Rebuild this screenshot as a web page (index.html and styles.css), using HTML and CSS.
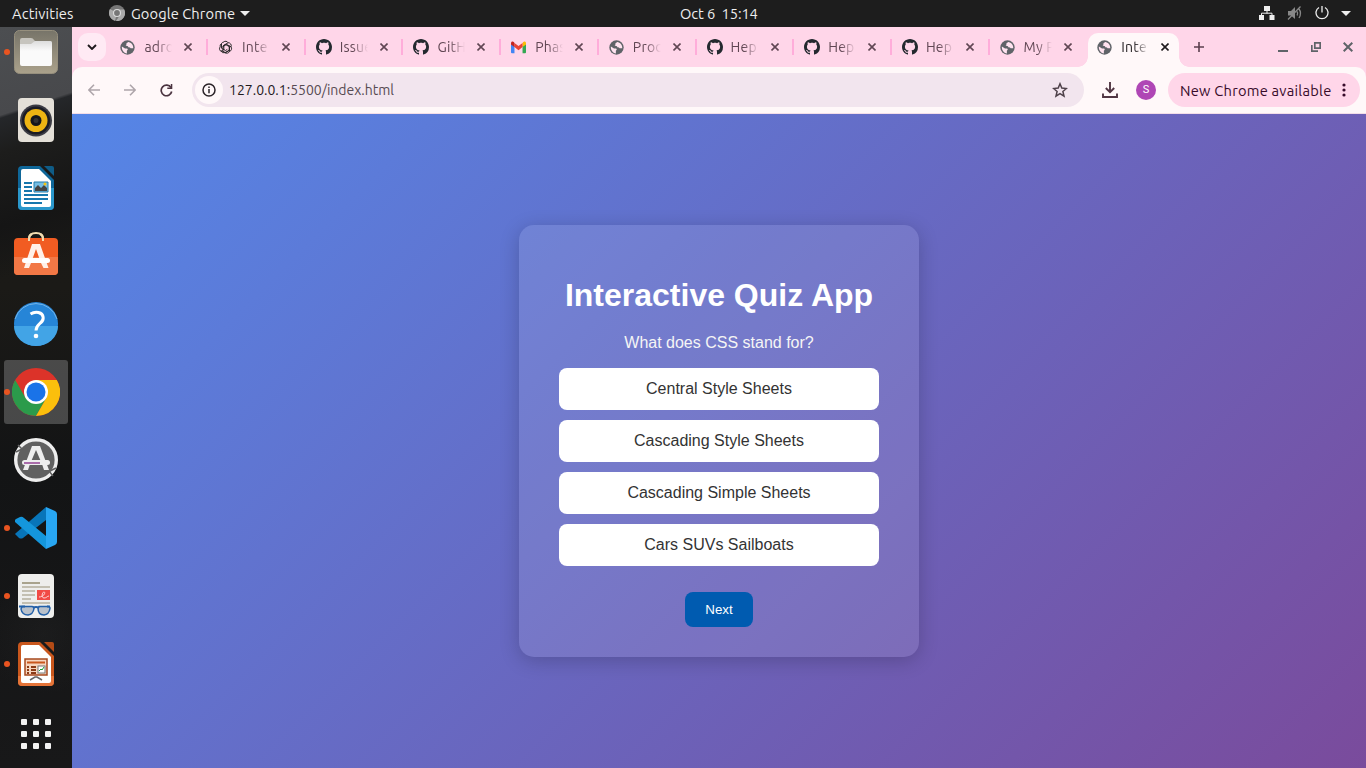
FILE: index.html
```html
<!DOCTYPE html>
<html lang="en">
<head>
<meta charset="utf-8">
<title>Interactive Quiz App</title>
<link rel="stylesheet" href="styles.css">
</head>
<body>
<svg class="defs" width="0" height="0">
  <symbol id="globe" viewBox="0 0 24 24"><circle cx="12" cy="12" r="11.5" fill="#5f6368"/><path d="M3 10.5l5 3.2h3.5l1 1.5-1.5 2v4.3C6 21 2.300 16 3 10.500zM13 3c-.7 1-2.500 1-2.700 2.400.5 1.700-.8 2.200-1.300 3.500 1.500.6 4 .3 4.300 2.200 1 1.400 3.200.4 3.700 2.200h4.200c.7-5-3-9.800-8.200-10.300z" fill="#ffe3f0"/></symbol>
  <symbol id="github" viewBox="0 0 16 16"><path fill="#24292f" d="M8 0C3.580 0 0 3.580 0 8c0 3.540 2.290 6.530 5.470 7.590.4.070.55-.17.55-.38 0-.19-.01-.82-.01-1.490-2.010.37-2.530-.49-2.690-.94-.09-.23-.48-.94-.82-1.130-.28-.15-.68-.52-.01-.53.63-.01 1.080.58 1.230.82.72 1.210 1.870.87 2.330.66.070-.52.28-.87.51-1.070-1.780-.2-3.640-.89-3.640-3.950 0-.87.31-1.590.82-2.150-.08-.2-.36-1.020.08-2.120 0 0 .67-.21 2.200.82.64-.18 1.320-.27 2-.27s1.360.09 2 .27c1.530-1.040 2.200-.82 2.200-.82.44 1.100.16 1.920.08 2.120.51.56.82 1.270.82 2.150 0 3.070-1.870 3.750-3.650 3.950.29.25.54.73.54 1.480 0 1.070-.01 1.930-.01 2.200 0 .21.15.46.55.38A8 8 0 0 0 16 8c0-4.420-3.580-8-8-8z"/></symbol>
  <symbol id="openai" viewBox="0 0 24 24"><g fill="none" stroke="#222" stroke-width="1.500"><path d="M12 7.300L7.900 9.700v7.500l-2.300 1.300A4.700 4.700 0 0 1 3.500 11"/><path d="M9 3.200a4.700 4.700 0 0 1 7.200 1.200L9.300 8.400v7.900M16.200 4.400a4.700 4.700 0 0 1 4.600 6.600l-6.900-4-6 3.500M20.800 11a4.700 4.700 0 0 1-2.400 7.300v-7.500L12 7.200M18.400 18.300a4.700 4.700 0 0 1-7.200 1.900l6.700-3.900V9M11.200 20.200a4.700 4.700 0 0 1-6-3l1-.2 5.800 3.300 6-3.500M5.600 5.700a4.700 4.700 0 0 1 3.600-2.500M5.600 5.700v7.500l6.300 3.600 3-1.800M5.600 5.700A4.700 4.700 0 0 0 3.500 11"/></g></symbol>
  <symbol id="gmail" viewBox="0 0 16 13"><path d="M0 2.500V11.500Q0 12.500 1 12.500H3.700V5z" fill="#4285f4"/><path d="M12.300 5V12.500H15Q16 12.500 16 11.500V2.500z" fill="#34a853"/><path d="M12.300 1.600V6L16 3.200V2C16 0 14-.3 12.800.8z" fill="#fbbc04"/><path d="M3.700 6V1.600L8 4.900l4.300-3.300V6L8 9.300z" fill="#ea4335"/><path d="M0 2V3.200L3.700 6V1.600L3.200.8C2-.3 0 0 0 2z" fill="#c5221f"/></symbol>
  <symbol id="close" viewBox="0 0 8 8"><path d="M.5.5l7 7M7.500.5l-7 7" stroke="currentColor" stroke-width="1.600" fill="none"/></symbol>
</svg>

<header class="topbar">
  <span class="activities">Activities</span>
  <span class="appmenu">
    <svg width="16" height="16" viewBox="0 0 16 16"><circle cx="8" cy="8" r="8" fill="#777"/><path d="M8 8L1 4a8 8 0 0 0 5 11.700zM8 4.500h7.200A8 8 0 0 1 7 16l4-6z" fill="#aaa"/><circle cx="8" cy="8" r="4" fill="#ddd"/><circle cx="8" cy="8" r="2.900" fill="#777"/></svg>
    <span class="appname">Google Chrome</span>
    <svg width="10" height="5" viewBox="0 0 10 5"><path d="M0 0h10L5 5z" fill="#eee"/></svg>
  </span>
  <span class="clock">Oct 6&nbsp; 15:14</span>
  <span class="status">
    <svg width="16" height="14" viewBox="0 0 16 14"><path d="M5 0h6v5H5zM0 9h5v5H0zM10.500 9h5v5h-5z" fill="#eee"/><path d="M8 4v3.500M2.500 10V7.200h10.500V10" stroke="#eee" fill="none"/></svg>
    <svg width="16" height="14" viewBox="0 0 16 14"><path d="M1 5h3l4-4v12L4 9.500H1z" fill="#888"/><path d="M1 13.500L13.500 .5M10 5.500q1.500 2 0 4M12 3q3 4 0 9" stroke="#888" fill="none" stroke-width="1.300"/></svg>
    <svg width="14" height="14" viewBox="0 0 14 14"><path d="M4 1.500a6 6 0 1 0 6 0M7 0v6.500" stroke="#eee" fill="none" stroke-width="1.300"/></svg>
    <svg width="10" height="5" viewBox="0 0 10 5"><path d="M0 0h10L5 5z" fill="#eee"/></svg>
  </span>
</header>

<main class="desktop">
  <nav class="dock">
    <div class="app running">
      <svg width="44" height="44" viewBox="0 0 44 44"><defs><linearGradient id="fg" x2="0" y2="1"><stop stop-color="#777469"/><stop offset="1" stop-color="#aaa18b"/></linearGradient><linearGradient id="ff" x2="0" y2="1"><stop stop-color="#ddd"/><stop offset=".4" stop-color="#fafafa"/></linearGradient></defs><rect x=".5" y=".5" width="43" height="43" rx="5" fill="url(#fg)" stroke="#968f7d"/><path d="M6 11V10Q6 8 8 8h9q2 0 3 2l1 1h15q2 0 2 2v14H6z" fill="#c6c4be"/><path d="M6 14h11l4-3h15q2 0 2 2v21q0 2-2 2H8q-2 0-2-2z" fill="url(#ff)"/></svg>
    </div>
    <div class="app">
      <svg width="36" height="44" viewBox="0 0 36 44"><rect width="36" height="44" rx="4" fill="#e4e0d8"/><circle cx="18" cy="22.500" r="16" fill="#3c3c44"/><circle cx="18" cy="22.500" r="14" fill="#1b1c25"/><circle cx="18" cy="22.500" r="11.500" fill="#edb413"/><circle cx="18" cy="22.500" r="5.500" fill="#15171c"/><circle cx="18" cy="22.500" r="2.500" fill="#333"/></svg>
    </div>
    <div class="app">
      <svg width="36" height="44" viewBox="0 0 36 44"><path d="M4 0h18l14 14v26q0 4-4 4H4q-4 0-4-4V4q0-4 4-4z" fill="#0f6799"/><path d="M0 22h36v18q0 4-4 4H4q-4 0-4-4z" fill="#2a97cb"/><path d="M5 3h16l12 12v24q0 2-2 2H5q-2 0-2-2V5q0-2 2-2z" fill="#fff"/><path d="M26 0h8q2 0 2 2v8z" fill="#0f5c87"/><path d="M6 17h8M6 21h8M6 25h8M6 29h24M6 33h24M6 37h18" stroke="#1777ad" stroke-width="2"/><path d="M16 16h14v10H16z" fill="#75bee5" stroke="#247caa"/><path d="M17 25v-3l3-3 3 3 3-3 3 3v3z" fill="#444"/><circle cx="27" cy="18" r="1.500" fill="#f5c211"/></svg>
    </div>
    <div class="app">
      <svg class="software" width="44" height="44" viewBox="0 0 44 44"><path d="M15 9V7q0-6 7-6t7 6v2" fill="none" stroke="#f3ddb1" stroke-width="2"/><rect y="6" width="44" height="37" rx="4" fill="#f15c22"/><path d="M0 25h44v14q0 4-4 4H4q-4 0-4-4z" fill="#f27846"/><path d="M15 9V7q0-4 3-5M29 9V7q0-4-3-5" fill="none" stroke="#f3ddb1" stroke-width="2"/><path d="M18 12h8l8.500 24h-5L27 31l-5-14-5 14-2 5h-5z" fill="#fff1e9"/><rect x="8" y="26" width="28" height="5" rx="2.500" fill="#fff"/></svg>
    </div>
    <div class="app">
      <svg width="44" height="44" viewBox="0 0 44 44"><circle cx="22" cy="22" r="22" fill="#2685d7"/><path d="M0 24h44a22 20 0 0 1-44 0z" fill="#42a4e6"/><path d="M1 17a22 22 0 0 1 42 0" fill="none" stroke="#72b4ea"/><path d="M16.500 12q4-2.500 8-1.500c6 1.500 5.500 7.500 2.500 10-3 2.500-5 3.500-5 8" fill="none" stroke="#fff" stroke-width="3"/><circle cx="22" cy="34" r="2.300" fill="#fff"/></svg>
    </div>
    <div class="app running focused">
      <svg width="48" height="48" viewBox="0 0 48 48"><circle cx="24" cy="24" r="24" fill="#dc3329"/><path d="M3.200 12A24 24 0 0 0 24 48l10.400-18L24 24l-10.400 6z" fill="#2b9b4b"/><path d="M24 12h20.800A24 24 0 0 1 24 48l10.400-18z" fill="#fbbf0c"/><circle cx="24" cy="24" r="12" fill="#fff"/><circle cx="24" cy="24" r="9.500" fill="#1a73e8"/></svg>
    </div>
    <div class="app">
      <svg width="44" height="44" viewBox="0 0 44 44"><circle cx="22" cy="22" r="20.300" fill="#606060" stroke="#eee" stroke-width="3.400"/><path d="M4 7l5 5M2 14l6-3M36 33l6-3M35 33l4 5" stroke="#606060" stroke-width="1.500"/><path d="M18 8h8l9 24h-5l-2-6-6-14-6 14-2 6H9z" fill="#eee"/><rect x="8" y="22" width="28" height="5" rx="2.500" fill="#eee"/><path d="M10 25h16" stroke="#924093" stroke-width="1.500"/></svg>
    </div>
    <div class="app running">
      <svg width="42" height="42" viewBox="0 0 42 42"><path d="M0 27l4 4q2 1 4 0L31 13V0L1 26z" fill="#0875b9"/><path d="M1 12l4-2q2-1 4 1l22 18v13L0 15q-.5-2 1-3z" fill="#1496dc"/><path d="M31 0l9 4q2 1 2 3v28q0 2-2 3l-9 4z" fill="#28a6f2"/></svg>
    </div>
    <div class="app running">
      <svg width="36" height="44" viewBox="0 0 36 44"><rect width="36" height="44" rx="4" fill="#eeeeec"/><path d="M4 9h18" stroke="#a9a38d" stroke-width="2"/><path d="M4 13h28M4 17h13M4 21h13M4 25h9M4 29h28" stroke="#c3bfb1" stroke-width="2"/><path d="M19 16h13v10H19z" fill="#f14a45"/><path d="M21 23c5 0 7-5 5-5s-3 6 0 6 3-2 5-2" fill="none" stroke="#ffd5d5"/><path d="M4 32.500h10q2 0 2 2-1 6-6 6.500-6 0-7-6zM21 32.500h9q2 0 2 2-1 6-6 6.500-6 0-6-7z" fill="#b9c1cb" stroke="#2360a8" stroke-width="1.500"/><path d="M1 32.500h6M15 34q3-2 6 0M29 32.500h3" fill="none" stroke="#2360a8" stroke-width="2"/></svg>
    </div>
    <div class="app running">
      <svg width="36" height="44" viewBox="0 0 36 44"><path d="M4 0h18l14 14v26q0 4-4 4H4q-4 0-4-4V4q0-4 4-4z" fill="#c9571d"/><path d="M0 34h36v6q0 4-4 4H4q-4 0-4-4z" fill="#e57438"/><path d="M5 3h16l12 12v24q0 2-2 2H5q-2 0-2-2V5q0-2 2-2z" fill="#fff"/><path d="M26 0h8q2 0 2 2v8z" fill="#b34b16"/><rect x="7" y="17" width="22" height="16" fill="#f6d6bf" stroke="#a7491f" stroke-width="1.500"/><path d="M9 20.500h18" stroke="#c9571d" stroke-width="2"/><path d="M9 25h2m2 0h5M9 28h2m2 0h5M9 31h2m2 0h5" stroke="#8b3b16" stroke-width="2"/><rect x="20" y="24" width="7" height="7" fill="#fff" stroke="#777"/><path d="M21 29l2-2 1 1 2-3" stroke="#18a030" fill="none"/><path d="M12 38l5-3h2l5 3" stroke="#666" stroke-width="1.500" fill="none"/></svg>
    </div>
    <div class="app grid-app">
      <svg width="30" height="30" viewBox="0 0 30 30" fill="#f2f2f2"><rect width="6" height="6" rx="1"/><rect x="12" width="6" height="6" rx="1"/><rect x="24" width="6" height="6" rx="1"/><rect y="12" width="6" height="6" rx="1"/><rect x="12" y="12" width="6" height="6" rx="1"/><rect x="24" y="12" width="6" height="6" rx="1"/><rect y="24" width="6" height="6" rx="1"/><rect x="12" y="24" width="6" height="6" rx="1"/><rect x="24" y="24" width="6" height="6" rx="1"/></svg>
    </div>
  </nav>

  <section class="browser">
    <div class="tabstrip">
      <div class="tabsearch"><svg width="10" height="6" viewBox="0 0 10 6"><path d="M1 1l4 4 4-4" fill="none" stroke="#1f1a1d" stroke-width="1.900"/></svg></div>
      <div class="tabs">
        <div class="tab"><svg class="fav"><use href="#globe"/></svg><span class="title">adro</span><svg class="x"><use href="#close"/></svg></div>
        <div class="tab"><svg class="fav"><use href="#openai"/></svg><span class="title">Inte</span><svg class="x"><use href="#close"/></svg></div>
        <div class="tab"><svg class="fav big"><use href="#github"/></svg><span class="title">Issue</span><svg class="x"><use href="#close"/></svg></div>
        <div class="tab"><svg class="fav big"><use href="#github"/></svg><span class="title">GitH</span><svg class="x"><use href="#close"/></svg></div>
        <div class="tab"><svg class="fav"><use href="#gmail"/></svg><span class="title">Phas</span><svg class="x"><use href="#close"/></svg></div>
        <div class="tab"><svg class="fav"><use href="#globe"/></svg><span class="title">Proc</span><svg class="x"><use href="#close"/></svg></div>
        <div class="tab"><svg class="fav big"><use href="#github"/></svg><span class="title">Hep</span><svg class="x"><use href="#close"/></svg></div>
        <div class="tab"><svg class="fav big"><use href="#github"/></svg><span class="title">Hep</span><svg class="x"><use href="#close"/></svg></div>
        <div class="tab"><svg class="fav big"><use href="#github"/></svg><span class="title">Hep</span><svg class="x"><use href="#close"/></svg></div>
        <div class="tab last"><svg class="fav"><use href="#globe"/></svg><span class="title">My P</span><svg class="x"><use href="#close"/></svg></div>
        <div class="tab active"><svg class="fav"><use href="#globe"/></svg><span class="title">Inte</span><svg class="x"><use href="#close"/></svg></div>
      </div>
      <svg class="newtab" width="10" height="10" viewBox="0 0 10 10"><path d="M5 0v10M0 5h10" stroke="#5b3f4e" stroke-width="1.600"/></svg>
      <div class="winctl">
        <svg width="10" height="10" viewBox="0 0 10 10"><path d="M0 9h10" stroke="#5f6368" stroke-width="2"/></svg>
        <svg width="10" height="10" viewBox="0 0 10 10"><path d="M3.800.8h5.400v5.400H3.800zM.8 3v6.200H7" fill="none" stroke="#5f6368" stroke-width="1.700"/></svg>
        <svg width="10" height="10" viewBox="0 0 10 10"><path d="M.7.7l8.600 8.600M9.300.7L.7 9.300" stroke="#5f6368" stroke-width="2"/></svg>
      </div>
    </div>
    <div class="toolbar">
      <svg width="12" height="12" viewBox="0 0 12 12"><path d="M12 6H1M6 .7L.8 6 6 11.300" fill="none" stroke="#aea5aa" stroke-width="1.600"/></svg>
      <svg class="fwd" width="12" height="12" viewBox="0 0 12 12"><path d="M0 6h11M6 .7L11.200 6 6 11.300" fill="none" stroke="#aea5aa" stroke-width="1.600"/></svg>
      <svg class="reload" width="13" height="13" viewBox="0 0 13 13"><path d="M11.700 7.500A5.300 5.300 0 1 1 11 3.600" fill="none" stroke="#4b3440" stroke-width="1.700"/><path d="M12.300 0v5H7.300V3.500h3.500V0z" fill="#4b3440"/></svg>
      <div class="omnibox">
        <span class="info"><svg width="14" height="14" viewBox="0 0 14 14"><circle cx="7" cy="7" r="6" fill="none" stroke="#2b2428" stroke-width="1.500"/><path d="M7 6v4.200M7 3.500v1.500" stroke="#2b2428" stroke-width="1.500"/></svg></span>
        <span class="url"><b>127.0.0.1:</b>5500/index.html</span>
        <svg class="star" width="16" height="16" viewBox="0 0 16 16"><path d="M8 1.800l1.800 4.300 4.600.4-3.500 3 1.100 4.600L8 11.600l-4 2.500 1.100-4.600-3.500-3 4.600-.4z" fill="none" stroke="#4e4149" stroke-width="1.500"/></svg>
      </div>
      <svg class="download" width="16" height="16" viewBox="0 0 16 16"><path d="M8 0v10M3.800 6L8 10.200 12.200 6M1 11.500V15h14v-3.500" fill="none" stroke="#513643" stroke-width="1.900"/></svg>
      <span class="avatar">S</span>
      <div class="update"><span>New Chrome available</span><svg width="4" height="14" viewBox="0 0 4 14" fill="#370b2a"><circle cx="2" cy="2" r="1.600"/><circle cx="2" cy="7" r="1.600"/><circle cx="2" cy="12" r="1.600"/></svg></div>
    </div>
    <div class="page">
      <div class="card">
        <h1>Interactive Quiz App</h1>
        <p class="question">What does CSS stand for?</p>
        <div class="options">
          <div class="option">Central Style Sheets</div>
          <div class="option">Cascading Style Sheets</div>
          <div class="option">Cascading Simple Sheets</div>
          <div class="option">Cars SUVs Sailboats</div>
        </div>
        <button class="next">Next</button>
      </div>
    </div>
  </section>
</main>
</body>
</html>
```
FILE: styles.css
```css
* { box-sizing: border-box; }
body {
  margin: 0;
  width: 1366px;
  height: 768px;
  overflow: hidden;
  display: flex;
  flex-direction: column;
  font-family: Ubuntu, "Noto Sans", sans-serif;
  font-size: 14px;
}
svg { display: block; flex: none; }
.defs { position: absolute; }

.topbar {
  height: 27px;
  flex: none;
  background: #1d1d1d;
  color: #eee;
  display: grid;
  grid-template-columns: 97px 571px 1fr auto;
  align-items: center;
  padding: 0 15px 1px 12px;
  font-size: 14.667px;
}
.activities { letter-spacing: .15px; }
.appmenu { display: flex; align-items: center; gap: 6px; }
.appname { width: 103px; white-space: nowrap; letter-spacing: .1px; }
.clock { white-space: pre; letter-spacing: -.1px; }
.status { display: flex; align-items: center; gap: 12px; }

.desktop { display: flex; flex: 1; min-height: 0; }

.dock {
  width: 72px;
  flex: none;
  overflow: hidden;
  background:
    radial-gradient(circle at 60% 82%, rgba(60, 60, 60, .15), transparent 60px),
    linear-gradient(162deg, #4c4e51 0, #48494c 84px, #25272a 87px, #1d1d1c 120px, #151515 190px, transparent 240px),
    linear-gradient(#171717, #1b1a17 35%, #131415 60%, #181819);
}
.app {
  height: 68px;
  display: flex;
  align-items: center;
  justify-content: center;
  position: relative;
}
.app:first-child { margin-top: -9px; }
.software { margin-top: -5px; }
.grid-app { height: 72px; }
.focused::after {
  content: "";
  position: absolute;
  inset: 2px 4px;
  border-radius: 3px;
  background: rgba(255, 255, 255, .22);
}
.focused svg { position: relative; z-index: 1; }
.running::before {
  content: "";
  position: absolute;
  z-index: 2;
  left: 4px;
  top: 31px;
  width: 6px;
  height: 6px;
  border-radius: 50%;
  background: #e95420;
}

.browser { flex: 1; min-width: 0; display: flex; flex-direction: column; background: #ffd6e9; }
.tabstrip { height: 40px; flex: none; display: flex; align-items: center; padding: 0 13px 0 6px; }
.tabsearch {
  width: 28px;
  height: 28px;
  border-radius: 10px;
  background: #ffeaf4;
  display: flex;
  align-items: center;
  justify-content: center;
}
.tabs { display: flex; margin-left: 4.4px; height: 100%; }
.tab {
  width: 97.7px;
  height: 40px;
  display: flex;
  align-items: center;
  padding-left: 10px;
  position: relative;
  color: #604653;
}
.tab:not(.last):not(.active)::after {
  content: "";
  position: absolute;
  right: 0;
  top: 12px;
  width: 2px;
  height: 16px;
  background: #ffadda;
}
.tab.active { color: #1f1a1d; width: 92px; }
.tab.active::before {
  content: "";
  position: absolute;
  left: 1px;
  top: 6px;
  width: 91px;
  height: 34px;
  border-radius: 10px 10px 0 0;
  background: #fff8f9;
}
.tab.active::after {
  content: "";
  position: absolute;
  left: -9px;
  bottom: 0;
  width: 111px;
  height: 10px;
  background:
    radial-gradient(circle at 0 0, transparent 9.500px, #fff8f9 10px) left / 10px 10px no-repeat,
    radial-gradient(circle at 100% 0, transparent 9.500px, #fff8f9 10px) right / 10px 10px no-repeat;
}
.tab svg, .tab .title { position: relative; }
.fav { width: 15px; height: 15px; }
.fav.big { width: 16px; height: 16px; }
.title {
  width: 28px;
  margin-left: 9px;
  white-space: nowrap;
  letter-spacing: .2px;
  -webkit-mask-image: linear-gradient(90deg, #000 45%, transparent);
  mask-image: linear-gradient(90deg, #000 45%, transparent);
}
.fav.big + .title { margin-left: 8px; }
.x { width: 8px; height: 8px; margin-left: 12px; }
.newtab { margin-left: 15px; }
.winctl { margin-left: auto; display: flex; gap: 22.5px; }

.toolbar {
  height: 47px;
  flex: none;
  display: flex;
  align-items: center;
  padding: 0 6px 0 16px;
  background: #fff8f9;
  border-bottom: 1px solid #f3dde8;
  border-radius: 10px 10px 0 0;
}
.fwd { margin-left: 24px; }
.reload { margin-left: 24px; }
.omnibox {
  width: 892px;
  height: 34px;
  margin-left: 19px;
  border-radius: 17px;
  background: #f2e5ee;
  display: flex;
  align-items: center;
  padding: 0 16px 0 3px;
}
.info {
  width: 28px;
  height: 28px;
  border-radius: 50%;
  background: #fff8f9;
  display: flex;
  align-items: center;
  justify-content: center;
}
.url { margin-left: 6px; color: #574b52; }
.url b { font-weight: 400; color: #1f1a1d; }
.star { margin-left: auto; }
.download { margin-left: 18px; }
.avatar {
  width: 20px;
  height: 20px;
  margin-left: 18px;
  border-radius: 50%;
  background: #af46b5;
  color: #fff;
  font: 11px/20px Roboto, sans-serif;
  text-align: center;
}
.update {
  width: 192px;
  height: 34px;
  margin-left: 12px;
  border-radius: 17px;
  background: #ffd6e9;
  color: #370b2a;
  display: flex;
  align-items: center;
  justify-content: space-between;
  padding: 0 14px 0 12px;
  white-space: nowrap;
  font-size: 14.667px;
  letter-spacing: .25px;
}

.page {
  flex: 1;
  display: flex;
  align-items: center;
  justify-content: center;
  background: linear-gradient(135deg, #5586e7, #7a4b9c);
  font-family: Arial, "Liberation Sans", sans-serif;
}
.card {
  width: 400px;
  height: 432px;
  padding: 30px 40px;
  border-radius: 15px;
  background: rgba(255, 255, 255, .1);
  box-shadow: 0 4px 20px rgba(0, 0, 0, .2);
  text-align: center;
  color: #fff;
}
h1 { margin: 22px -10px 20px; font-size: 32px; line-height: 37px; }
.question { margin: 0 0 16px; font-size: 16px; line-height: 18px; color: #f5f5f5; }
.options { display: flex; flex-direction: column; gap: 10px; }
.option {
  height: 42px;
  border-radius: 8px;
  background: #fff;
  color: #333;
  font-size: 16px;
  line-height: 42px;
}
.next {
  margin-top: 26px;
  height: 35px;
  padding: 0 20px;
  border: 0;
  border-radius: 8px;
  background: #005bb0;
  color: #fff;
  font: 13.333px Arial, "Liberation Sans", sans-serif;
}
```
